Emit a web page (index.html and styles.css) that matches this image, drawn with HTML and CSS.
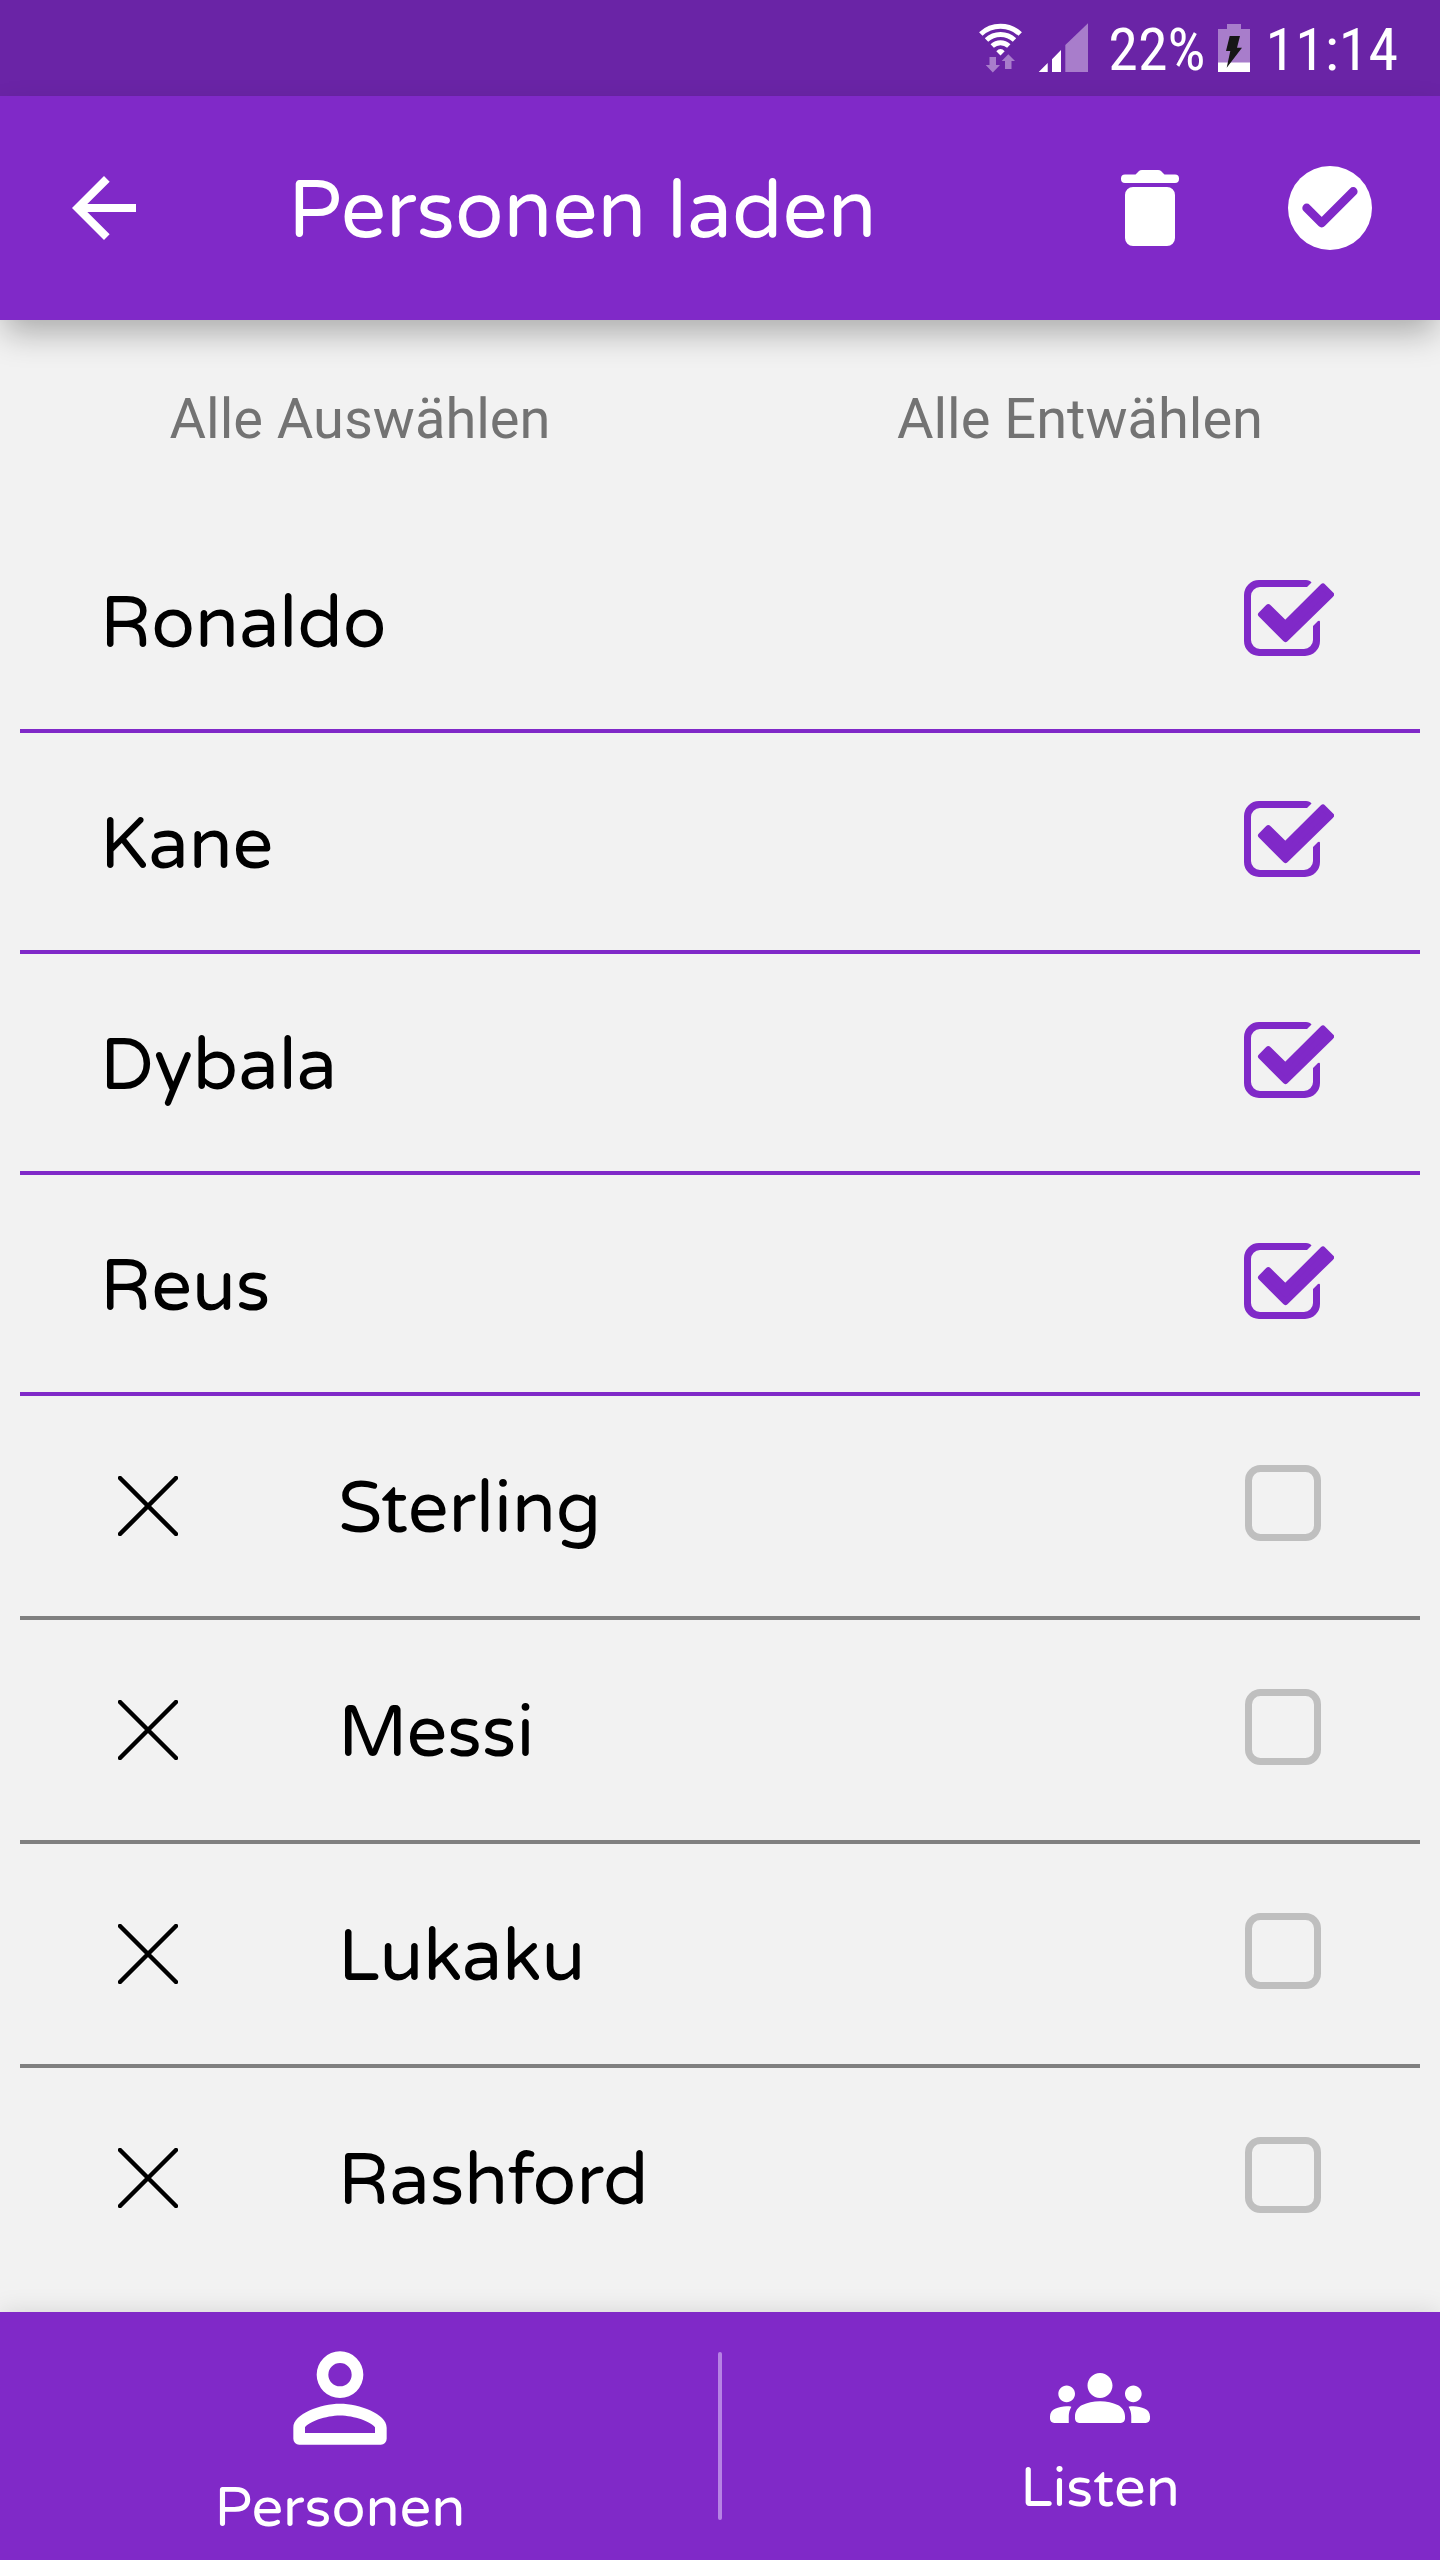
FILE: index.html
```html
<!DOCTYPE html>
<html lang="de">
<head>
    <meta charset="UTF-8">
    <meta name="viewport" content="width=device-width, initial-scale=1.0">
    <title>Personen laden</title>
    <link rel="stylesheet" href="styles.css">
</head>
<body>
    <div class="status-bar">
        <svg class="wifi" width="43" height="50" viewBox="0 0 43 50" aria-hidden="true">
            <g fill="none" stroke="#fff" stroke-width="5">
                <path d="M1.8 11A29 29 0 0 1 41.2 11"/>
                <path d="M7.5 17A20.5 20.5 0 0 1 35.5 17"/>
                <path d="M13.2 23A12.5 12.5 0 0 1 29.8 23"/>
            </g>
            <path fill="#fff" d="M21.500 32.500L17.300 28.300Q21.500 23.500 25.700 28.300z"/>
            <path fill="#a87dcb" d="M10.500 34h6.500v8h4l-7.200 7.500L6.700 42h3.800zM26 46h6.500v-8H36l-6.700-6.700L22.700 38H26z"/>
        </svg>
        <svg class="signal" width="50" height="50" viewBox="0 0 50 50" aria-hidden="true">
            <path fill="#fff" d="M.7 49l9-9v9zM14 36.300L23 27v22h-9z"/>
            <path fill="#a87dcb" d="M27.300 22L50 .3V49H27.300z"/>
        </svg>
        <span class="percent">22%</span>
        <svg class="battery" width="32" height="48" viewBox="0 0 32 48" aria-hidden="true">
            <path fill="#a87dcb" d="M9 0h14v5h9v43H0V5h9z"/>
            <path fill="#fff" d="M0 38.500h32V48H0z"/>
            <path fill="#161616" d="M11.700 12H22l-3 11.700h5L8.700 43.700 12.300 27H8z"/>
        </svg>
        <span class="time">11:14</span>
    </div>

    <header class="app-header">
        <button class="icon-button" type="button" aria-label="Zurück">
            <svg width="96" height="96" viewBox="0 0 24 24"><path fill="#fff" d="M20 11H7.830l5.590-5.590L12 4l-8 8 8 8 1.410-1.410L7.830 13H20z"/></svg>
        </button>
        <h1>Personen laden</h1>
        <button class="icon-button" type="button" aria-label="Löschen">
            <svg width="58" height="76" viewBox="0 0 58 76"><path fill="#fff" d="M4 4.500h10.500L18 1q1-1 3-1h16q2 0 3 1l3.500 3.500H54a4 4 0 0 1 4 4v.500a4 4 0 0 1-4 4H4a4 4 0 0 1-4-4v-.500a4 4 0 0 1 4-4zM12 17h34a8 8 0 0 1 8 8v43a8 8 0 0 1-8 8H12a8 8 0 0 1-8-8V25a8 8 0 0 1 8-8z"/></svg>
        </button>
        <button class="icon-button confirm" type="button" aria-label="Bestätigen">
            <svg width="84" height="84" viewBox="0 0 84 84">
                <circle cx="42" cy="42" r="42" fill="#fff"/>
                <path d="M18.700 42l15 15L65.200 25.500" fill="none" stroke="#8029c8" stroke-width="8.800" stroke-linecap="round" stroke-linejoin="round"/>
            </svg>
        </button>
    </header>

    <main>
        <div class="select-actions">
            <button type="button">Alle Auswählen</button>
            <button type="button">Alle Entwählen</button>
        </div>

        <ul class="persons" id="persons">
            <li class="person selected">
                <label for="p1">Ronaldo</label>
                <span class="check"><input type="checkbox" id="p1" checked><svg class="box"><use href="#box-on"/></svg></span>
            </li>
            <li class="person selected">
                <label for="p2">Kane</label>
                <span class="check"><input type="checkbox" id="p2" checked><svg class="box"><use href="#box-on"/></svg></span>
            </li>
            <li class="person selected">
                <label for="p3">Dybala</label>
                <span class="check"><input type="checkbox" id="p3" checked><svg class="box"><use href="#box-on"/></svg></span>
            </li>
            <li class="person selected">
                <label for="p4">Reus</label>
                <span class="check"><input type="checkbox" id="p4" checked><svg class="box"><use href="#box-on"/></svg></span>
            </li>
            <li class="person">
                <button class="remove" type="button" aria-label="Sterling entfernen"><svg><use href="#cross"/></svg></button>
                <label for="p5">Sterling</label>
                <span class="check"><input type="checkbox" id="p5"><svg class="box"><use href="#box-off"/></svg></span>
            </li>
            <li class="person">
                <button class="remove" type="button" aria-label="Messi entfernen"><svg><use href="#cross"/></svg></button>
                <label for="p6">Messi</label>
                <span class="check"><input type="checkbox" id="p6"><svg class="box"><use href="#box-off"/></svg></span>
            </li>
            <li class="person">
                <button class="remove" type="button" aria-label="Lukaku entfernen"><svg><use href="#cross"/></svg></button>
                <label for="p7">Lukaku</label>
                <span class="check"><input type="checkbox" id="p7"><svg class="box"><use href="#box-off"/></svg></span>
            </li>
            <li class="person">
                <button class="remove" type="button" aria-label="Rashford entfernen"><svg><use href="#cross"/></svg></button>
                <label for="p8">Rashford</label>
                <span class="check"><input type="checkbox" id="p8"><svg class="box"><use href="#box-off"/></svg></span>
            </li>
        </ul>
    </main>

    <nav class="tab-bar">
        <a href="#persons">
            <svg width="140" height="140" viewBox="0 0 24 24"><path fill="#fff" fill-rule="evenodd" d="M12 4a4 4 0 1 1 0 8 4 4 0 0 1 0-8zm0 2a2 2 0 1 0 0 4 2 2 0 0 0 0-4zM12 13c3.300 0 8 1.700 8 4.100V19a1 1 0 0 1-1 1H5a1 1 0 0 1-1-1v-1.900C4 14.700 8.700 13 12 13zm0 2c-2.400 0-5.400 1.100-6 2v1h12v-1c-.6-.9-3.600-2-6-2z"/></svg>
            <span>Personen</span>
        </a>
        <div class="divider"></div>
        <a href="#lists">
            <svg width="100" height="100" viewBox="0 0 24 24"><path fill="#fff" d="M12 12.750c1.630 0 3.070.39 4.240.9 1.080.48 1.760 1.560 1.760 2.730V17c0 .55-.45 1-1 1H7c-.55 0-1-.45-1-1v-.61c0-1.180.68-2.260 1.760-2.730 1.170-.52 2.610-.91 4.240-.91zM4 13c1.100 0 2-.9 2-2s-.9-2-2-2-2 .9-2 2 .9 2 2 2zm1.130 1.100c-.37-.06-.74-.1-1.130-.1-.99 0-1.930.21-2.780.58C.48 14.900 0 15.620 0 16.430V17c0 .55.45 1 1 1h3.500v-1.610c0-.83.23-1.610.63-2.290zM20 13c1.100 0 2-.9 2-2s-.9-2-2-2-2 .9-2 2 .9 2 2 2zm4 3.430c0-.81-.48-1.530-1.220-1.850-.85-.37-1.790-.58-2.780-.58-.39 0-.76.04-1.130.1.4.68.63 1.460.63 2.290V18H23c.55 0 1-.45 1-1v-.57zM12 6c1.660 0 3 1.340 3 3s-1.340 3-3 3-3-1.340-3-3 1.340-3 3-3z"/></svg>
            <span>Listen</span>
        </a>
    </nav>

    <!-- shared icons -->
    <svg class="sprite" width="0" height="0" aria-hidden="true">
        <symbol id="box-on" viewBox="0 0 90 82">
            <path fill="#8029c8" d="M15 0H62q4 0 5.500 2.500L63 7H16a9 9 0 0 0-9 9v44a9 9 0 0 0 9 9h44a9 9 0 0 0 9-9V46l5-5q2-1 2 1v19a15 15 0 0 1-15 15H15A15 15 0 0 1 0 61V15A15 15 0 0 1 15 0z"/>
            <path fill="#8029c8" stroke="#8029c8" stroke-width="6" stroke-linejoin="round" d="M17 34.500l7.300-7.300L41.300 44 79 6.500l8 8L41.400 59z"/>
        </symbol>
        <symbol id="box-off" viewBox="0 0 90 82">
            <rect x="4.500" y="3.500" width="69" height="69" rx="12" fill="none" stroke="#bfbfbf" stroke-width="7"/>
        </symbol>
        <symbol id="cross" viewBox="0 0 60 60">
            <path d="M2 2l56 56M58 2L2 58" fill="none" stroke="#000" stroke-width="4.500" stroke-linecap="round"/>
        </symbol>
    </svg>
</body>
</html>
```

FILE: styles.css
```css
* {
    box-sizing: border-box;
}

body {
    margin: 0;
    min-height: 100vh;
    display: flex;
    flex-direction: column;
    background-color: #f2f2f2;
    color: #000;
    font-family: "Varela Round", "Open Sans", "Noto Sans", sans-serif;
}

button {
    padding: 0;
    border: none;
    background: none;
    font: inherit;
    color: inherit;
    cursor: pointer;
}

svg {
    display: block;
    flex: none;
}

.status-bar {
    height: 96px;
    padding: 0 42px;
    display: flex;
    justify-content: flex-end;
    align-items: center;
    background-color: #6a24a6;
    color: #fff;
    font-family: "Roboto Condensed", "Liberation Sans Narrow", Roboto, sans-serif;
    font-size: 60px;
    line-height: 72px;
}

.status-bar span {
    padding-top: 4px;
}

.signal {
    margin: 0 20px 0 16px;
}

.battery {
    margin: 0 16px 0 12px;
}

.app-header {
    height: 224px;
    padding: 0 68px 0 56px;
    display: flex;
    align-items: center;
    background-color: #8029c8;
    color: #fff;
    box-shadow: 0 16px 32px -4px rgba(0, 0, 0, 0.3);
}

.app-header h1 {
    flex: 1;
    margin: 0 0 0 136px;
    padding-top: 8px;
    font-size: 80px;
    line-height: 96px;
    font-weight: normal;
}

.confirm {
    margin-left: 109px;
}

main {
    flex: 1;
}

.select-actions {
    height: 192px;
    padding-top: 6px;
    display: flex;
    align-items: center;
    color: #737373;
    font-family: Roboto, sans-serif;
    font-size: 56px;
    line-height: 64px;
}

.select-actions button {
    flex: 1;
    padding: 32px 0;
}

.persons {
    margin: 0 20px;
    padding: 0;
    list-style: none;
}

.person {
    height: 224px;
    padding: 0 86px 0 98px;
    display: flex;
    align-items: center;
    border-bottom: 4px solid #808080;
    font-size: 72px;
    line-height: 88px;
}

.person.selected {
    height: 221px;
    padding-left: 80px;
    border-color: #8029c8;
}

.person:last-child {
    border-color: transparent;
}

.person label {
    flex: 1;
    padding-top: 8px;
}

.remove {
    margin-right: 160px;
}

.remove svg {
    width: 60px;
    height: 60px;
}

/* input and drawn box share one grid cell */
.check {
    display: grid;
}

.check input {
    grid-area: 1 / 1;
    margin: 0;
    appearance: none;
    cursor: pointer;
}

.box {
    grid-area: 1 / 1;
    width: 90px;
    height: 82px;
    pointer-events: none;
}

.tab-bar {
    height: 248px;
    display: flex;
    align-items: center;
    background-color: #8029c8;
    box-shadow: 0 0 24px rgba(0, 0, 0, 0.12);
}

.tab-bar a {
    flex: 1;
    padding-bottom: 4px;
    display: flex;
    flex-direction: column;
    align-items: center;
    gap: 9px;
    color: #fff;
    font-size: 56px;
    line-height: 64px;
    text-decoration: none;
}

.divider {
    width: 4px;
    height: 168px;
    margin: 0 38px;
    border-radius: 2px;
    background-color: #b682e4;
}

.sprite {
    position: absolute;
}
```
